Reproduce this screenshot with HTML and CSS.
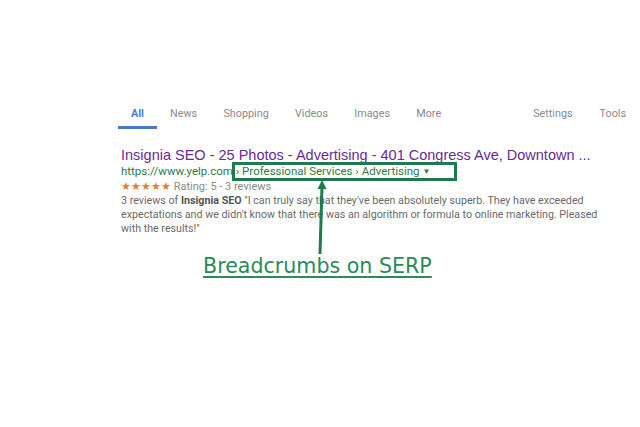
FILE: index.html
```html
<!DOCTYPE html>
<html>
<head>
<meta charset="utf-8">
<link rel="stylesheet" href="styles.css">
</head>
<body>
<div class="page">
  <nav class="tabs">
    <div class="tab-group">
      <span class="tab active">All</span>
      <span class="tab">News</span>
      <span class="tab">Shopping</span>
      <span class="tab">Videos</span>
      <span class="tab">Images</span>
      <span class="tab">More</span>
    </div>
    <div class="tab-group right">
      <span class="tab">Settings</span>
      <span class="tab">Tools</span>
    </div>
  </nav>
  <div class="result">
    <div class="title">Insignia SEO - 25 Photos - Advertising - 401 Congress Ave, Downtown ...</div>
    <div class="url">https://www.yelp.com<span class="crumbs"> › Professional Services › Advertising <span class="caret">▼</span></span></div>
    <div class="rating"><span class="stars">★★★★★</span> Rating: 5 - 3 reviews</div>
    <div class="snippet">3 reviews of <b>Insignia SEO</b> "I can truly say that they've been absolutely superb. They have exceeded expectations and we didn't know that there was an algorithm or formula to online marketing. Pleased with the results!"</div>
    <div class="highlight"></div>
    <svg class="arrow" width="20" height="76" viewBox="0 0 20 76">
      <line x1="9" y1="6" x2="7" y2="74" stroke="#1e7a4f" stroke-width="3"/>
      <polygon points="9,0 4.5,9 13.5,9" fill="#1e7a4f"/>
    </svg>
  </div>
  <div class="caption">Breadcrumbs on SERP</div>
</div>
</body>
</html>
```
FILE: styles.css
```css
html, body {
  margin: 0;
  padding: 0;
  background: #fff;
}
.page {
  width: 640px;
  height: 427px;
  font-family: Roboto, "Liberation Sans", Arial, sans-serif;
  padding-top: 105px;
  box-sizing: border-box;
}
.tabs {
  display: flex;
  justify-content: space-between;
  padding-left: 118px;
  padding-right: 14px;
  height: 27px;
}
.tab-group {
  display: flex;
}
.tab {
  font-size: 10.8px;
  color: #8a8a8a;
  margin-right: 26.3px;
  line-height: 18px;
}
.tab-group.right .tab { margin-right: 0; margin-left: 27px; }
.tab.active {
  color: #4a7fd0;
  font-weight: bold;
  padding: 0 13px;
  margin-right: 13px;
  border-bottom: 3px solid #4a78c8;
  height: 24px;
  box-sizing: border-box;
}
.result {
  position: relative;
  margin-left: 121px;
  margin-top: 14px;
  width: 480px;
  font-family: Roboto, "Liberation Sans", Arial, sans-serif;
}
.title {
  font-family: "Liberation Sans", Arial, sans-serif;
  font-size: 14.5px;
  color: #6a2a95;
  line-height: 18px;
  white-space: nowrap;
}
.url {
  font-size: 11.5px;
  color: #2f7b44;
  line-height: 14px;
}
.caret { font-size: 8px; position: relative; top: -1px; }
.rating {
  font-size: 11px;
  color: #8a8a8a;
  line-height: 14px;
}
.stars { color: #e2822c; font-size: 11.3px; }
.snippet {
  font-size: 10.7px;
  color: #6a6a6a;
  line-height: 14px;
}
.snippet b { color: #555; }
.highlight {
  position: absolute;
  left: 111px;
  top: 16px;
  width: 225px;
  height: 19px;
  border: 3px solid #1e7a4f;
  box-sizing: border-box;
}
.arrow {
  position: absolute;
  left: 192px;
  top: 34px;
}
.caption {
  margin-left: 203px;
  margin-top: 18px;
  font-family: "DejaVu Sans", Tahoma, sans-serif;
  font-size: 20.6px;
  color: #2a8a5c;
  text-decoration: underline;
  text-underline-offset: 3px;
  text-decoration-thickness: 2px;
}
```
